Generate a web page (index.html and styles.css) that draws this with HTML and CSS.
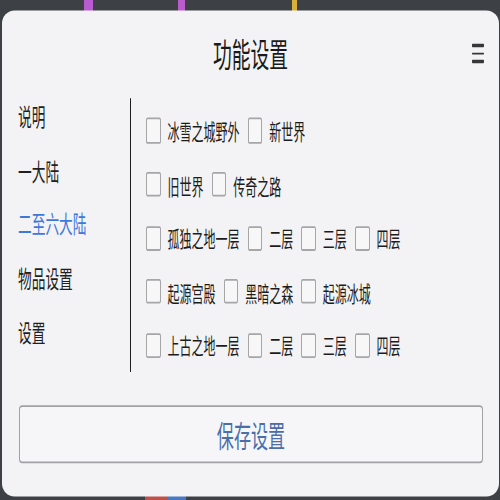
FILE: index.html
```html
<!DOCTYPE html>
<html lang="zh-CN">
<head>
<meta charset="utf-8">
<title>功能设置</title>
<link rel="stylesheet" href="styles.css">
</head>
<body>
<div class="stage">
  <section class="panel">
    <header class="header">
      <span class="spacer"></span>
      <h1 class="title">功能设置</h1>
      <button class="menu" aria-label="菜单"><i></i><i></i><i></i></button>
    </header>
    <div class="main">
      <nav class="nav">
        <a class="nav-item">说明</a>
        <a class="nav-item">一大陆</a>
        <a class="nav-item active">二至六大陆</a>
        <a class="nav-item">物品设置</a>
        <a class="nav-item">设置</a>
      </nav>
      <div class="options">
        <div class="row">
          <label class="opt"><span class="box"></span>冰雪之城野外</label>
          <label class="opt"><span class="box"></span>新世界</label>
        </div>
        <div class="row">
          <label class="opt"><span class="box"></span>旧世界</label>
          <label class="opt"><span class="box"></span>传奇之路</label>
        </div>
        <div class="row">
          <label class="opt"><span class="box"></span>孤独之地一层</label>
          <label class="opt"><span class="box"></span>二层</label>
          <label class="opt"><span class="box"></span>三层</label>
          <label class="opt"><span class="box"></span>四层</label>
        </div>
        <div class="row">
          <label class="opt"><span class="box"></span>起源宫殿</label>
          <label class="opt"><span class="box"></span>黑暗之森</label>
          <label class="opt"><span class="box"></span>起源冰城</label>
        </div>
        <div class="row">
          <label class="opt"><span class="box"></span>上古之地一层</label>
          <label class="opt"><span class="box"></span>二层</label>
          <label class="opt"><span class="box"></span>三层</label>
          <label class="opt"><span class="box"></span>四层</label>
        </div>
      </div>
    </div>
    <button class="save">保存设置</button>
  </section>
</div>
</body>
</html>
```

FILE: styles.css
```css
html, body {
  margin: 0;
  padding: 0;
  width: 500px;
  height: 500px;
  overflow: hidden;
}

body {
  font-family: "Noto Sans CJK SC", "Noto Sans", sans-serif;
  color: #1c1c1c;
  background:
    linear-gradient(90deg, transparent 84px, #b85bd0 84px, #b85bd0 93px, transparent 93px, transparent 178px, #b95ccc 178px, #b95ccc 185px, transparent 185px, transparent 292px, #d9b13a 292px, #d9b13a 297px, transparent 297px) top left / 100% 11px no-repeat,
    linear-gradient(90deg, transparent 145px, #c0504a 145px, #c0504a 168px, #4a78c0 168px, #4a78c0 186px, transparent 186px) bottom left / 100% 4px no-repeat,
    #3d4045;
}

/* the interface is drawn tall and narrow: lay it out flat, then stretch it vertically */
.stage {
  display: flow-root;
  width: 500px;
  height: 285px;
  transform: scaleY(1.7544);
  transform-origin: 0 0;
}

.panel {
  box-sizing: border-box;
  margin: 6.3px 0 0 2px;
  width: 497px;
  height: 277px;
  background: #f3f3f5;
  border-radius: 12.5px / 7.4px;
  display: flex;
  flex-direction: column;
}

.header {
  box-sizing: border-box;
  height: 44.5px;
  padding-top: 13.1px;
  display: grid;
  grid-template-columns: 1fr auto 1fr;
  align-items: start;
}

.title {
  margin: 0;
  font-size: 18.8px;
  font-weight: 400;
  line-height: 22.8px;
  color: #1a1a1a;
}

.menu {
  justify-self: end;
  margin: 5.7px 15px 0 0;
  padding: 0;
  border: 0;
  background: none;
  display: flex;
  flex-direction: column;
  gap: 2.85px;
}

.menu i {
  display: block;
  width: 12px;
  height: 1.71px;
  border-radius: 0.6px;
  background: #363636;
}

.main {
  display: flex;
  height: 161.3px;
}

.nav {
  box-sizing: border-box;
  width: 128px;
  padding-left: 16px;
  display: flex;
  flex-direction: column;
}

.nav-item {
  font-size: 13.7px;
  line-height: 30.8px;
  color: #1f1f1f;
}

.nav-item.active {
  color: #3f78dc;
}

.options {
  box-sizing: border-box;
  margin-top: 5.1px;
  height: 156.2px;
  border-left: 1px solid #1e1e1e;
  padding: 3.4px 0 0 15px;
  display: flex;
  flex-direction: column;
}

.row {
  height: 30.8px;
  display: flex;
  align-items: center;
  gap: 8px;
}

.opt {
  display: flex;
  align-items: center;
  gap: 6.8px;
  font-size: 12px;
  line-height: 17px;
  color: #1c1c1c;
}

.box {
  box-sizing: border-box;
  width: 14.8px;
  height: 14.3px;
  border: 1px solid #a6a6a9;
  border-radius: 1.7px;
  background: #f7f7f8;
}

.save {
  box-sizing: border-box;
  margin: 18.8px 0 0 17px;
  width: 464px;
  height: 33.6px;
  padding: 0;
  border: 1px solid #a2a2a6;
  border-radius: 3.4px / 2.3px;
  background: #f6f6f8;
  font-family: inherit;
  font-size: 17.1px;
  line-height: 31.6px;
  color: #4b6eaa;
}
```
